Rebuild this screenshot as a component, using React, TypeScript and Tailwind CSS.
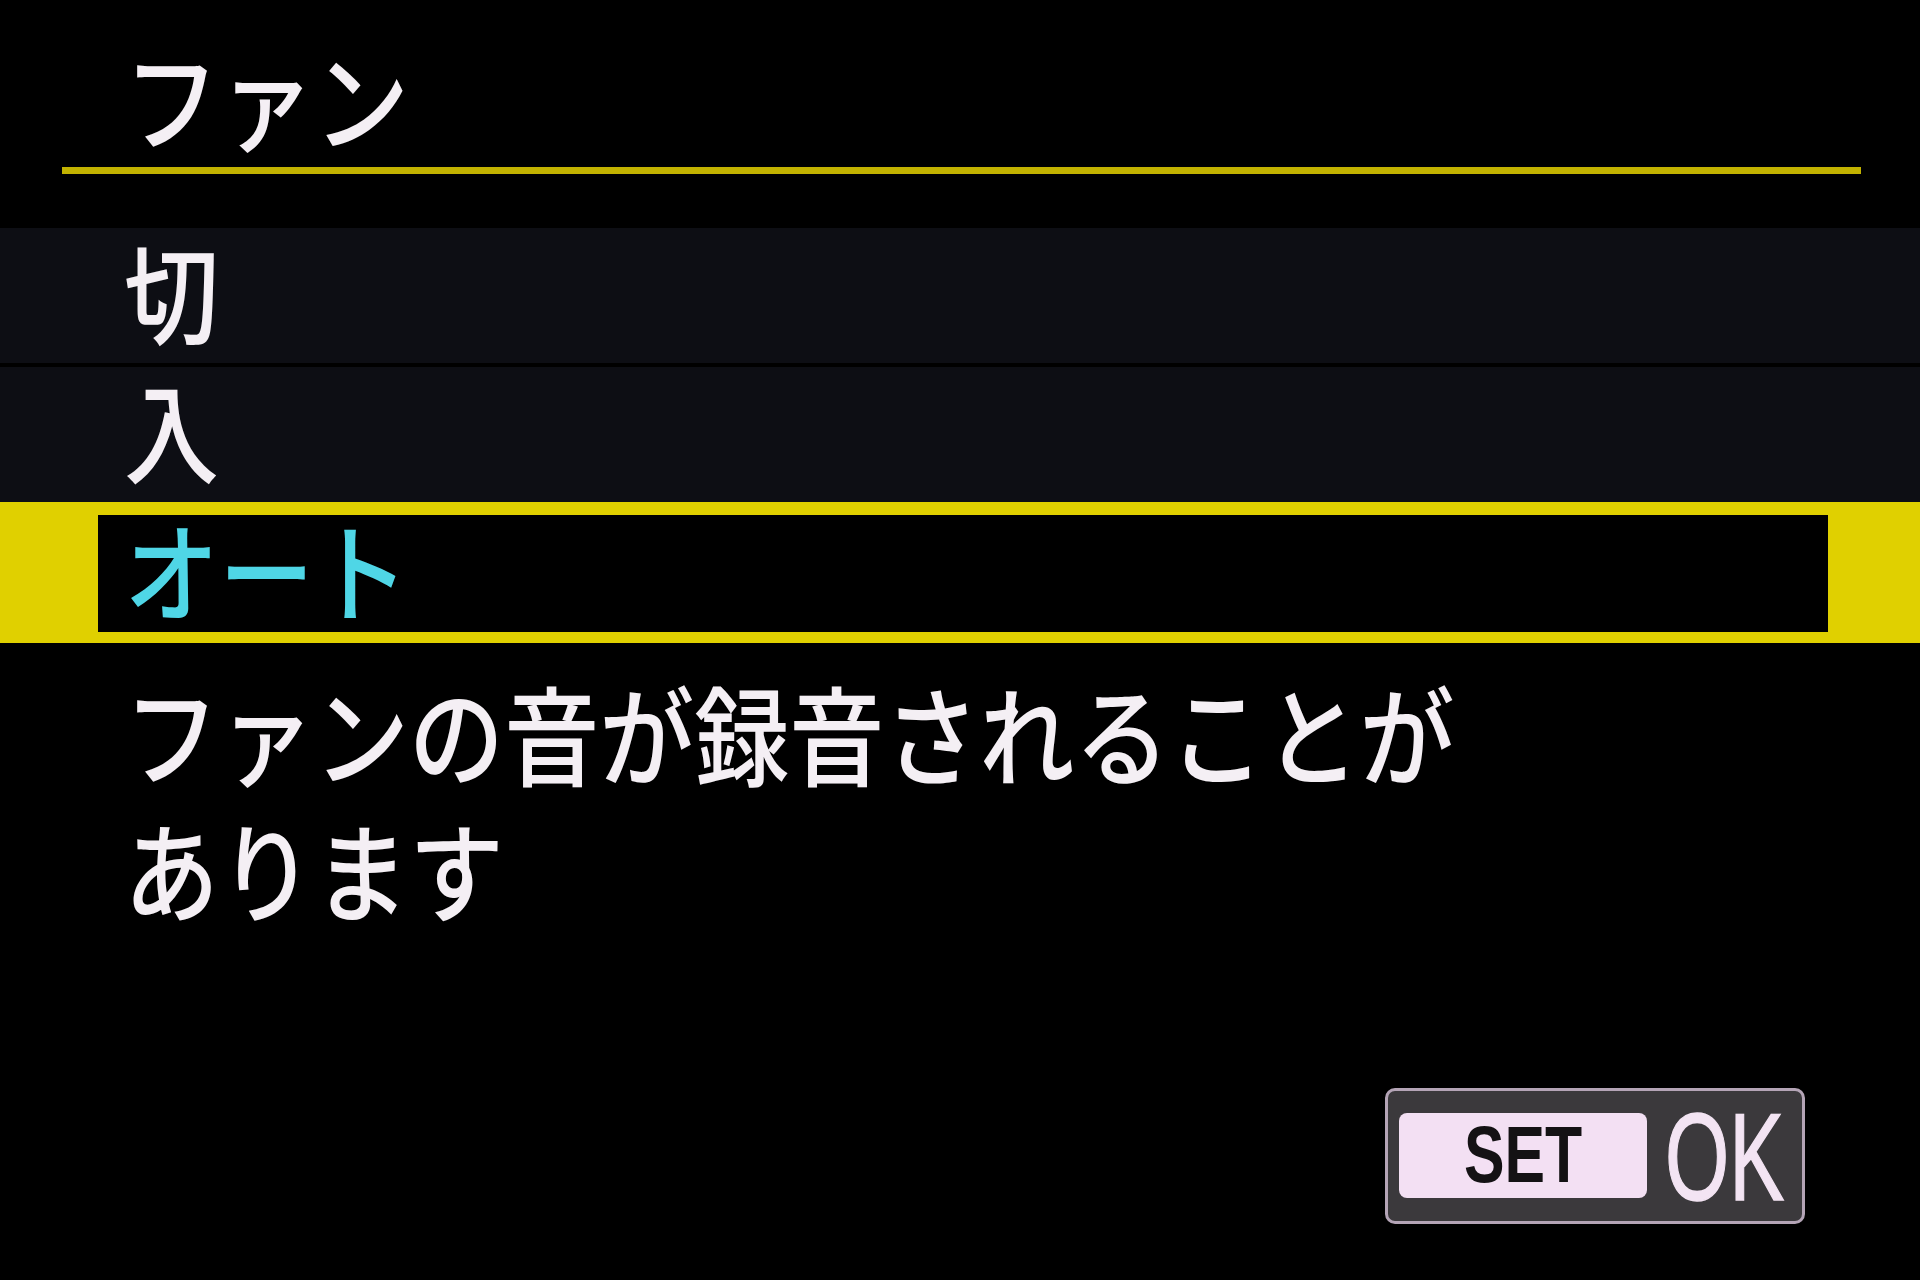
import React from "react";

const jp = { fontFamily: '"Noto Sans CJK JP", "Noto Sans", sans-serif' };
const latin = { fontFamily: '"Liberation Sans", Arial, sans-serif' };

const options = [
  { id: "off", label: "切" },
  { id: "on", label: "入" },
  { id: "auto", label: "オート" },
];

const Label = ({ children }: { children: React.ReactNode }) => (
  <span className="inline-block origin-left scale-x-[0.88] whitespace-nowrap">{children}</span>
);

const App = () => {
  const selected = "auto";

  return (
    <div className="w-[1920px] h-[1280px] bg-black text-[#f4eff4] overflow-hidden flex flex-col font-medium" style={jp}>
      {/* Title */}
      <div className="h-[167px] pl-[124px] pt-[42px] text-[108px] leading-[108px]">
        <Label>ファン</Label>
      </div>
      <div className="ml-[62px] w-[1799px] h-[7px] bg-[#c2b200]" />

      {/* Options */}
      <div className="mt-[54px] flex flex-col">
        {options.map((opt, i) => {
          if (opt.id === selected) {
            return (
              <div key={opt.id} className="h-[141px] bg-[#e0d000] pt-[13px] pb-[11px] pl-[98px] pr-[92px]">
                <div className="h-full bg-black pl-[26px] pb-[12px] text-[108px] leading-[105px] text-[#4fd6e6] flex items-center">
                  <Label>{opt.label}</Label>
                </div>
              </div>
            );
          }
          return (
            <div
              key={opt.id}
              className={`h-[135px] bg-[#0d0e14] pl-[124px] text-[108px] leading-[122px] ${i === 0 ? "mb-[4px]" : ""}`}
            >
              <Label>{opt.label}</Label>
            </div>
          );
        })}
      </div>

      {/* Description */}
      <div className="pt-[20px] pl-[124px] text-[108px] leading-[136px]">
        <div>
          <Label>ファンの音が録音されることが</Label>
        </div>
        <div>
          <Label>あります</Label>
        </div>
      </div>

      {/* SET OK */}
      <div className="mt-[153px] flex justify-end pr-[115px]">
        <div className="w-[420px] h-[136px] rounded-[10px] border-[3px] border-[#b4a4b6] bg-[#3b393c] flex items-center pl-[11px]">
          <div className="w-[248px] h-[85px] rounded-[8px] bg-[#f3e0f3] flex items-center justify-center mt-[-2px]">
            <span className="inline-block w-[118px] overflow-visible">
              <span
                className="inline-block origin-left scale-x-[0.76] text-[80px] leading-[80px] font-bold text-[#141214] whitespace-nowrap"
                style={latin}
              >
                SET
              </span>
            </span>
          </div>
          <span className="ml-[18px] inline-block w-[120px]">
            <span
              className="inline-block origin-left scale-x-[0.66] text-[125px] leading-[125px] font-normal text-[#f3e4f3] whitespace-nowrap [-webkit-text-stroke:1.5px_currentColor]"
              style={latin}
            >
              OK
            </span>
          </span>
        </div>
      </div>
    </div>
  );
};

export default App;
